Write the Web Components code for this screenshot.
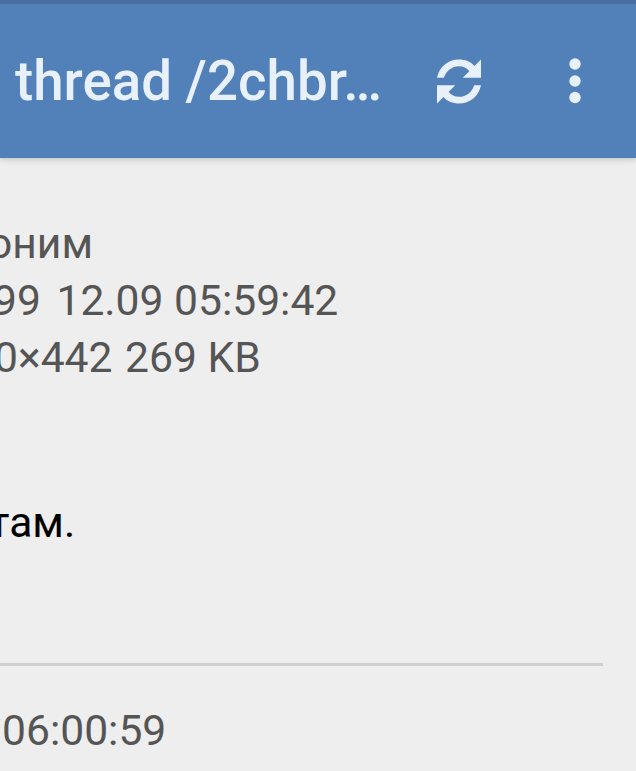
<!DOCTYPE html>
<html>
<head>
<meta charset="utf-8">
<title>thread</title>
<style>
  html, body { margin: 0; height: 100%; background: #eee; overflow: hidden; }
  body { font-family: Roboto, "Liberation Sans", sans-serif; }
  .gap { margin-right: 5px; }
  .gap-sm { margin-right: 2px; }
</style>
</head>
<body>
<app-bar title="thread /2chbr…"></app-bar>
<post-view>
  <span slot="name">оним</span>
  <span slot="date"><span class="gap">99</span> 12.09 05:59:42</span>
  <span slot="file"><span class="gap-sm">0×442</span> 269 KB</span>
  <span slot="body">там.</span>
  <span slot="next">06:00:59</span>
</post-view>
<script>
class AppBar extends HTMLElement {
  constructor() {
    super();
    this.attachShadow({ mode: 'open' });
    this.shadowRoot.innerHTML = `
      <style>
        :host {
          display: block;
          background: #5181b8;
          border-top: 4px solid #4a6fa1;
          box-shadow: 0 1px 6px rgba(0,0,0,.22);
          color: #e8f0fa;
          position: relative;
        }
        .bar { display: flex; align-items: center; height: 154px; padding-left: 15px; }
        .title { font-size: 54.7px; font-weight: 500; width: 422px; white-space: nowrap; }
        svg { display: block; fill: currentColor; }
        .more { margin-left: 88px; }
      </style>
      <div class="bar">
        <div class="title">${this.getAttribute('title')}</div>
        <svg width="44" height="45" viewBox="0 0 1536 1536">
          <path d="M1536 0V640H896L1128 408C1040 290 920 232 768 232C520 232 310 400 240 640H0C70 270 380 0 768 0C990 0 1170 70 1310 226Z"/>
          <path d="M0 1536V896H640L408 1128C496 1246 616 1304 768 1304C1016 1304 1226 1136 1296 896H1536C1466 1266 1156 1536 768 1536C546 1536 366 1466 226 1310Z"/>
        </svg>
        <svg class="more" width="12" height="46" viewBox="0 0 12 46">
          <circle cx="6" cy="6" r="5.7"/><circle cx="6" cy="23" r="5.7"/><circle cx="6" cy="39.5" r="5.7"/>
        </svg>
      </div>`;
  }
}
customElements.define('app-bar', AppBar);

class PostView extends HTMLElement {
  constructor() {
    super();
    this.attachShadow({ mode: 'open' });
    this.shadowRoot.innerHTML = `
      <style>
        :host { display: block; overflow: hidden; padding-top: 57px; font-size: 42.6px; color: #555; }
        .meta div { line-height: 57px; height: 57px; white-space: nowrap; }
        .name { margin-left: -12px; }
        .date { margin-left: -7px; }
        .file { margin-left: -6px; }
        .body { margin: 108px 0 0 -11px; color: #000; line-height: 57px; }
        hr { margin: 112px 33px 0 0; border: 0; height: 3px; background: #cfcfcf; }
        .next { margin: 36px 0 0 2px; line-height: 57px; }
      </style>
      <div class="meta">
        <div class="name"><slot name="name"></slot></div>
        <div class="date"><slot name="date"></slot></div>
        <div class="file"><slot name="file"></slot></div>
      </div>
      <div class="body"><slot name="body"></slot></div>
      <hr>
      <div class="next"><slot name="next"></slot></div>`;
  }
}
customElements.define('post-view', PostView);
</script>
</body>
</html>
